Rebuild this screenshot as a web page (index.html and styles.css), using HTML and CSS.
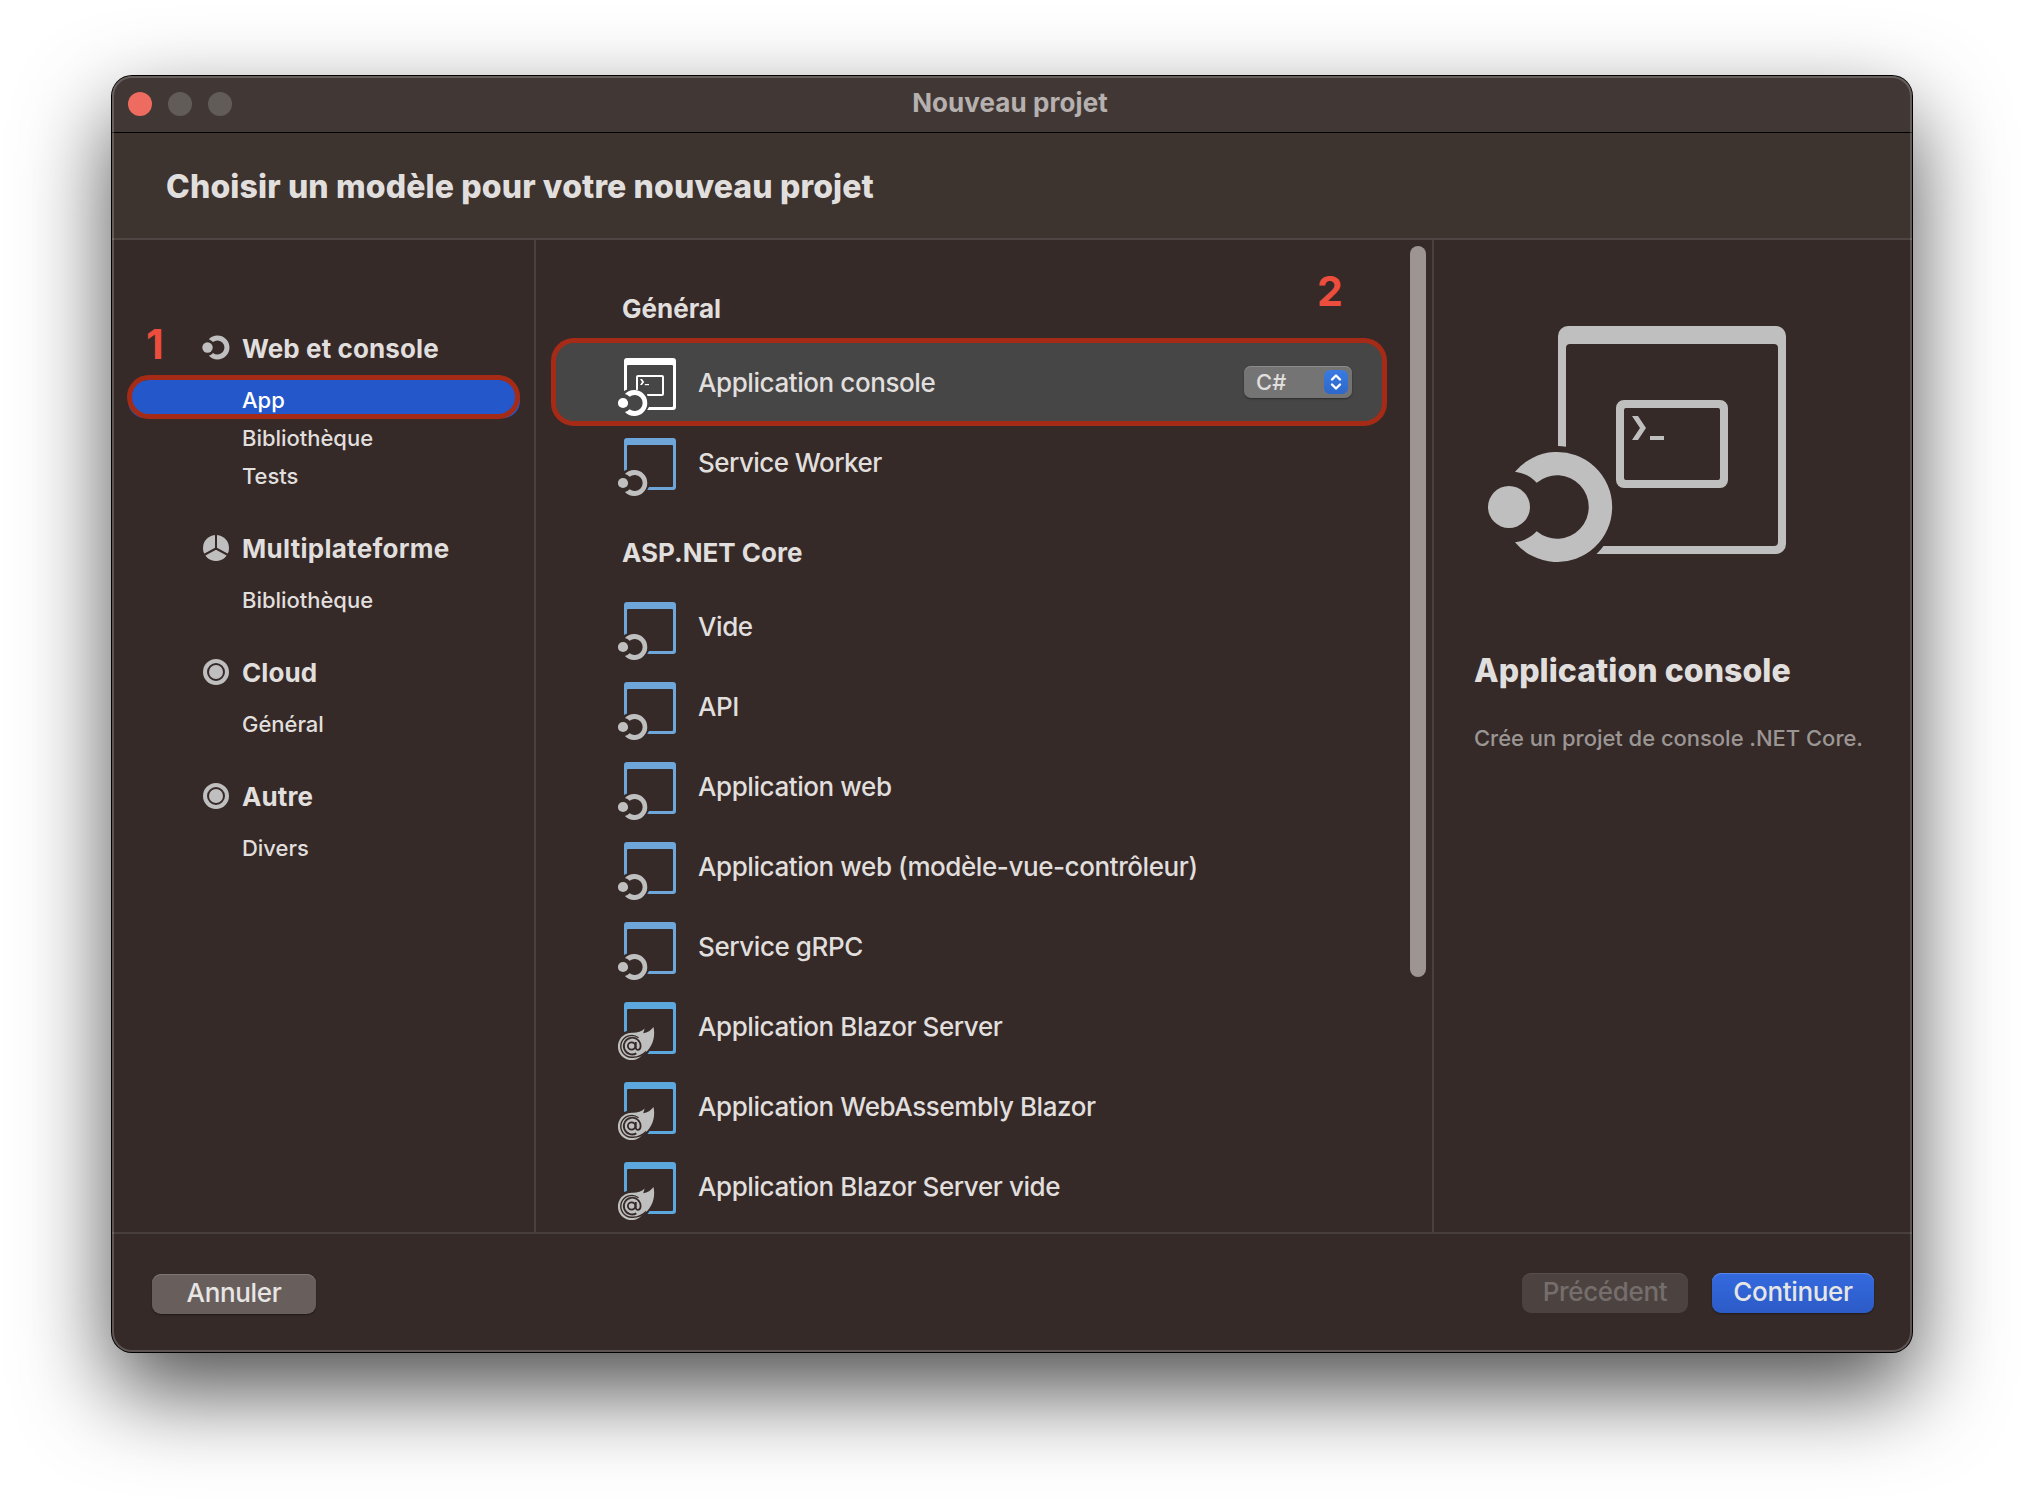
FILE: index.html
```html
<!DOCTYPE html>
<html lang="fr">
<head>
<meta charset="utf-8">
<title>Nouveau projet</title>
<link rel="stylesheet" href="styles.css">
</head>
<body>
<svg class="defs" width="0" height="0" aria-hidden="true">
  <defs>
    <g id="net-badge">
      <circle cx="5" cy="45" r="5.1"/>
      <path d="M6.9 36A13 13 0 1 1 6.900 54A9.200 9.200 0 0 0 11.600 51.200A8 8 0 1 0 11.600 38.800A9.200 9.200 0 0 0 6.900 36Z"/>
    </g>
    <path id="frame" d="M6 33V3a3 3 0 0 1 3-3H55a3 3 0 0 1 3 3V49a3 3 0 0 1-3 3H29.200L31 49H54a1 1 0 0 0 1-1V8a1 1 0 0 0-1-1H10a1 1 0 0 0-1 1V31.600Z"/>
    <symbol id="i-window" viewBox="0 0 58 58">
      <use href="#frame" class="frame"/>
      <use href="#net-badge" class="badge"/>
    </symbol>
    <symbol id="i-blazor" viewBox="0 0 58 58">
      <path class="frame-blazor" d="M6 30V3a3 3 0 0 1 3-3H55a3 3 0 0 1 3 3V49a3 3 0 0 1-3 3H29.500L31.500 49H54a1 1 0 0 0 1-1V8a1 1 0 0 0-1-1H10a1 1 0 0 0-1 1V29Z"/>
      <path class="badge" d="M13.500 30.800C19 31 23.500 30 26.600 26.500L25.200 31.200C29.500 30.500 33 28.500 35.500 25C38 36 33.500 47.500 24.500 52.800A13.700 13.700 0 1 1 13.500 30.800Z"/>
      <path class="groove" d="M28 49.500C24.500 53.500 19.500 55.400 14 55.200A10.900 10.900 0 1 1 20.500 35.800"/>
      <circle class="groove at" cx="13.600" cy="44" r="3.700"/>
      <path class="groove at" d="M17.800 40V45.500C17.800 49 22.600 48.800 22.600 44A8.400 8.400 0 1 0 18.300 51.400"/>
    </symbol>
    <symbol id="i-ring" viewBox="0 0 26 26">
      <circle cx="13" cy="13" r="11" fill="none" stroke="#bfbfbf" stroke-width="4"/>
      <circle cx="13" cy="13" r="7" fill="#bfbfbf"/>
    </symbol>
  </defs>
</svg>

<main class="window">
  <header class="titlebar">
    <div class="lights"><i class="light close"></i><i class="light"></i><i class="light"></i></div>
    <div class="title">Nouveau projet</div>
  </header>
  <section class="heading"><h1>Choisir un modèle pour votre nouveau projet</h1></section>

  <div class="content">
    <nav class="sidebar">
      <div class="group">
        <h2><svg class="cat" viewBox="0 0 28 26"><circle cx="5.500" cy="12.500" r="5.200"/><path d="M6.800 4.200A12 12 0 1 1 6.800 20.800A9 9 0 0 0 11 17.900A7 7 0 1 0 11 7.100A9 9 0 0 0 6.800 4.200Z"/></svg><span>Web et console</span></h2>
        <ul>
          <li class="selected">App</li>
          <li>Bibliothèque</li>
          <li>Tests</li>
        </ul>
        <span class="step step-one">1</span>
      </div>
      <div class="group">
        <h2 class="wide"><svg class="cat" viewBox="-1 0 28 26"><circle cx="13" cy="13" r="13"/><path d="M13 0V13.500M13 13.500L1 20M13 13.500L25 20" fill="none" stroke="#352a28" stroke-width="2"/></svg><span>Multiplateforme</span></h2>
        <ul><li>Bibliothèque</li></ul>
      </div>
      <div class="group">
        <h2><svg class="cat" viewBox="-1 0 28 26"><use href="#i-ring" width="26" height="26"/></svg><span>Cloud</span></h2>
        <ul><li>Général</li></ul>
      </div>
      <div class="group">
        <h2><svg class="cat" viewBox="-1 0 28 26"><use href="#i-ring" width="26" height="26"/></svg><span>Autre</span></h2>
        <ul><li>Divers</li></ul>
      </div>
    </nav>

    <section class="templates">
      <h2 class="first">Général</h2>
      <div class="row active">
        <svg class="icon" viewBox="0 0 58 58">
          <use href="#frame"/>
          <use href="#net-badge"/>
          <path d="M18 32V19a2 2 0 0 1 2-2H44a2 2 0 0 1 2 2V36a2 2 0 0 1-2 2H29.500L29 36H44V19H20V31.800Z"/>
          <path d="M22 21H24L26.200 24L24 27H22L24 24Z"/><path d="M26.800 26H31V27.200H26.800Z"/>
        </svg>
        <span class="label">Application console</span>
        <div class="select"><span>C#</span><svg class="stepper" viewBox="0 0 24 24"><path d="M8 9.500L12 5.500L16 9.500M8 14.500L12 18.500L16 14.500"/></svg></div>
        <span class="step step-two">2</span>
      </div>
      <div class="row"><svg class="icon"><use href="#i-window"/></svg><span class="label tight">Service Worker</span></div>
      <h2>ASP.NET Core</h2>
      <div class="row"><svg class="icon"><use href="#i-window"/></svg><span class="label">Vide</span></div>
      <div class="row"><svg class="icon"><use href="#i-window"/></svg><span class="label">API</span></div>
      <div class="row"><svg class="icon"><use href="#i-window"/></svg><span class="label">Application web</span></div>
      <div class="row"><svg class="icon"><use href="#i-window"/></svg><span class="label">Application web (modèle-vue-contrôleur)</span></div>
      <div class="row"><svg class="icon"><use href="#i-window"/></svg><span class="label">Service gRPC</span></div>
      <div class="row"><svg class="icon"><use href="#i-blazor"/></svg><span class="label">Application Blazor Server</span></div>
      <div class="row"><svg class="icon"><use href="#i-blazor"/></svg><span class="label">Application WebAssembly Blazor</span></div>
      <div class="row"><svg class="icon"><use href="#i-blazor"/></svg><span class="label">Application Blazor Server vide</span></div>
      <div class="scrollbar"></div>
    </section>

    <aside class="detail">
      <svg class="hero" viewBox="28 26 298 236">
        <path d="M98 146V36a10 10 0 0 1 10-10H316a10 10 0 0 1 10 10V244a10 10 0 0 1-10 10H136.500A61 61 0 0 0 143.500 246H314a4 4 0 0 0 4-4V48a4 4 0 0 0-4-4H110a4 4 0 0 0-4 4V146.700A61 61 0 0 0 98 146Z"/>
        <path fill-rule="evenodd" d="M164 100H260a8 8 0 0 1 8 8V180a8 8 0 0 1-8 8H164a8 8 0 0 1-8-8V108a8 8 0 0 1 8-8ZM166 108a2 2 0 0 0-2 2V178a2 2 0 0 0 2 2H258a2 2 0 0 0 2-2V110a2 2 0 0 0-2-2Z"/>
        <path d="M172 116H178L186 128L178 140H172L180 128ZM190 136H204V140H190Z"/>
        <circle cx="49" cy="207" r="21"/>
        <path d="M55 171.700A55 55 0 1 1 55 242.300A36 36 0 0 0 76.700 231.300A31.700 31.700 0 1 0 76.700 182.700A36 36 0 0 0 55 171.700Z"/>
      </svg>
      <h3>Application console</h3>
      <p>Crée un projet de console .NET Core.</p>
    </aside>
  </div>

  <footer class="footer">
    <button class="btn cancel">Annuler</button>
    <div class="nav-buttons">
      <button class="btn previous" disabled>Précédent</button>
      <button class="btn next">Continuer</button>
    </div>
  </footer>
</main>
</body>
</html>
```
FILE: styles.css
```css
* { box-sizing: border-box; }
body {
  margin: 0;
  width: 2024px;
  height: 1500px;
  padding: 76px 112px 0;
  overflow: hidden;
  background: #fff;
  color: #e1dfdd;
  font-family: Inter, "Liberation Sans", sans-serif;
}
.defs { display: block; position: absolute; }
h1, h2, h3, p, ul { margin: 0; padding: 0; list-style: none; }
span, h1, h3, p { white-space: nowrap; }

.window {
  width: 1800px;
  height: 1276px;
  position: relative;
  display: flex;
  flex-direction: column;
  border-radius: 20px;
  background: #352a28;
  box-shadow: 0 0 0 1px #000, 0 38px 90px rgba(0,0,0,.7);
}
.window::after {
  content: "";
  position: absolute;
  inset: 0;
  border: 2px solid rgba(255,255,255,.2);
  border-radius: 20px;
  pointer-events: none;
}
.titlebar {
  height: 57px;
  display: grid;
  grid-template-columns: 120px 1fr 140px;
  align-items: center;
  padding-left: 16px;
  background: #413836;
  border-bottom: 1px solid #000;
  border-radius: 20px 20px 0 0;
}
.lights { display: flex; gap: 16px; }
.light { width: 24px; height: 24px; border-radius: 50%; background: #625c59; }
.light.close { background: #ed6b5f; }
.title { margin-top: -2px; text-align: center; font-size: 26px; line-height: 32px; font-weight: 700; letter-spacing: .08px; color: #b6b1af; }
.heading {
  height: 107px;
  padding: 34px 0 0 54px;
  background: #3d332f;
  border-bottom: 2px solid #4f4542;
}
.heading h1 { font-size: 32px; line-height: 40px; font-weight: 800; letter-spacing: .13px; }

.content { height: 992px; display: grid; grid-template-columns: 424px 898px 478px; }
.sidebar { border-right: 2px solid #4a403d; padding-top: 88px; }
.group { position: relative; height: 124px; }
.group:first-child { height: 200px; }
.group h2 { display: flex; align-items: center; height: 40px; padding-left: 90px; gap: 12px; font-size: 26px; font-weight: 700; line-height: 40px; letter-spacing: .1px; }
.group h2.wide { letter-spacing: .27px; }
.group h2 span { padding-top: 2px; }
.cat { width: 28px; height: 26px; fill: #bfbfbf; flex: none; }
.group ul { padding: 12px 16px 0; }
.group li { height: 38px; padding-left: 114px; font-size: 22px; line-height: 40px; font-weight: 450; letter-spacing: -.03px; }
.group li.selected {
  position: relative;
  color: #fff;
  margin: 0 -2px 0 0;
  background: #2458ca;
  border-radius: 20px 20px 17px 17px;
}
.group li.selected::after {
  content: "";
  position: absolute;
  inset: -5px 0 -1px -1px;
  border: 5px solid #a62b17;
  border-radius: 22px;
}
.step { position: absolute; color: #ec4d3d; font-size: 41px; line-height: 42px; font-weight: 700; }
.step-one { left: 34px; top: -5px; }
.step-two { left: 765px; top: -72px; }

.templates { position: relative; border-right: 2px solid #4a403d; padding: 48px 46px 0 16px; overflow: hidden; }
.templates h2 { height: 84px; padding: 31px 0 0 70px; font-size: 26px; line-height: 40px; font-weight: 700; }
.templates h2.first { height: 54px; padding-top: 1px; }
.row { position: relative; height: 80px; display: flex; align-items: center; padding-left: 66px; gap: 22px; font-size: 26px; line-height: 32px; }
.label { margin-top: 1px; font-weight: 450; letter-spacing: -.42px; }
.label.tight { letter-spacing: -.55px; }
.icon { width: 58px; height: 58px; flex: none; margin-top: 10px; }
.frame { fill: #6fa6da; }
.frame-blazor { fill: #5ba7de; }
.badge { fill: #bfbfbf; }
.groove { fill: none; stroke: #352a28; stroke-width: 1.4; }
.at { stroke-width: 1.8; }
.row.active { background: #464646; border-radius: 18px; }
.row.active .icon { fill: #fff; }
.row.active::after {
  content: "";
  position: absolute;
  inset: -4px -1px -4px -1px;
  border: 5px solid #a62b17;
  border-radius: 23px;
}
.select {
  width: 108px; height: 32px; margin: 0 34px 0 auto; padding: 0 4px 0 12px;
  display: flex; align-items: center; justify-content: space-between;
  background: #747474; border-radius: 7px;
  box-shadow: inset 0 1px #8b8b8b, 0 1px 2px rgba(0,0,0,.4);
  font-size: 22px; font-weight: 500;
}
.stepper { width: 24px; height: 24px; border-radius: 6px; background: linear-gradient(#3a7be2, #2d68ca); fill: none; stroke: #fff; stroke-width: 2.4; stroke-linecap: round; stroke-linejoin: round; }
.scrollbar { position: absolute; left: 874px; top: 6px; width: 16px; height: 731px; border-radius: 8px; background: #9c9591; }

.detail { padding: 86px 0 0 40px; }
.hero { display: block; width: 298px; height: 236px; margin-left: 14px; fill: #bfbfbf; }
.detail h3 { margin-top: 89px; font-size: 32px; line-height: 40px; font-weight: 800; letter-spacing: .05px; }
.detail p { margin-top: 32px; font-size: 22px; line-height: 30px; font-weight: 450; letter-spacing: -.03px; color: #9b9694; }

.footer { height: 120px; border-top: 2px solid #483e3b; display: flex; justify-content: space-between; padding: 39px 38px 0 40px; }
.nav-buttons { display: flex; gap: 24px; }
.btn { height: 40px; padding: 0 0 2px; border: 0; border-radius: 9px; font: 450 26px/36px Inter, sans-serif; letter-spacing: -.35px; color: #e8e6e5; text-align: center; }
.cancel { width: 164px; margin-top: 1px; background: #685f5d; box-shadow: inset 0 1px #7d7573, 0 1px 2px rgba(0,0,0,.4); }
.previous { width: 166px; background: #4c4340; color: #766e6c; box-shadow: inset 0 1px #574e4b; }
.next { width: 162px; background: linear-gradient(#346ae0, #2c5bc6); box-shadow: inset 0 1px #5a86e8, 0 1px 2px rgba(0,0,0,.4); }
```
